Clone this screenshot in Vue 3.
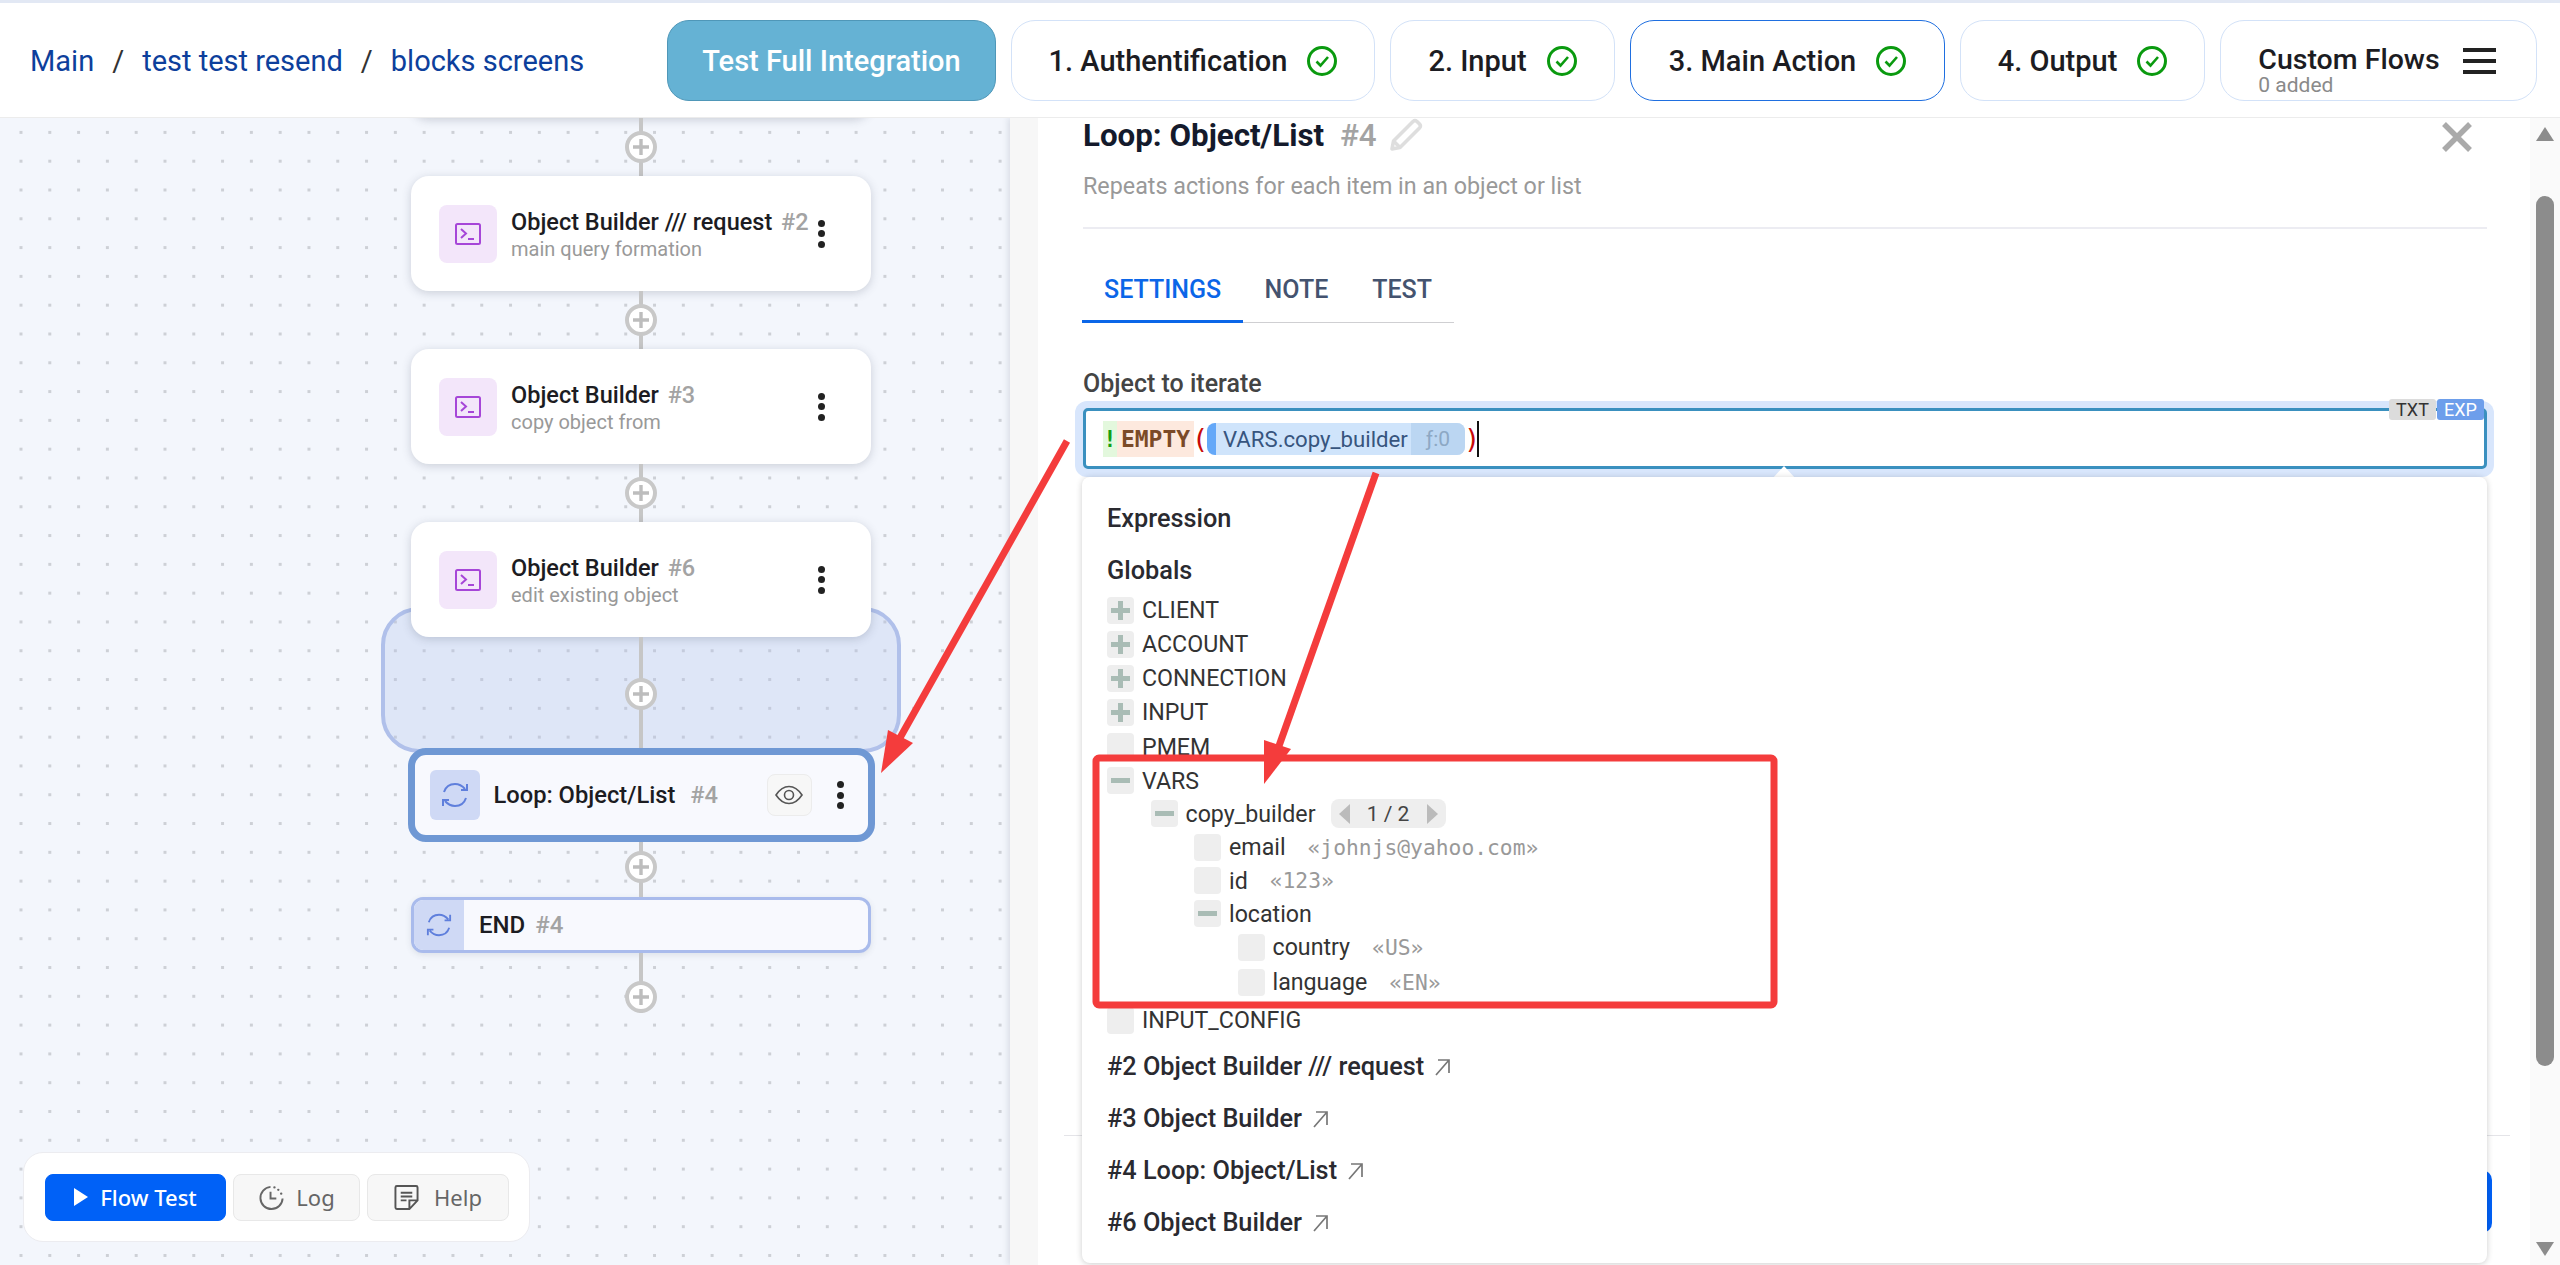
<template>
  <div class="page">
    <header class="topbar">
      <nav class="crumbs">
        <a>Main</a><i>/</i><a>test test resend</a><i>/</i><a>blocks screens</a>
      </nav>
      <div class="steps">
        <button class="step step-test">Test Full Integration</button>
        <button v-for="s in steps" :key="s.label" class="step" :class="{ active: s.active }" :style="{ width: s.width + 'px' }">
          {{ s.label }}
          <svg class="check" viewBox="0 0 30 30" width="30" height="30">
            <circle cx="15" cy="15" r="13.5" fill="none" stroke="#0a9a0f" stroke-width="3" />
            <path d="M9.5 15.5l4 4 7.5-8.5" fill="none" stroke="#0a9a0f" stroke-width="2.6" />
          </svg>
        </button>
        <button class="step step-custom">
          <span class="custom-text">
            <b>Custom Flows</b>
            <small>0 added</small>
          </span>
          <span class="burger"><i></i><i></i><i></i></span>
        </button>
      </div>
    </header>

    <main class="body">
      <section class="canvas">
        <div class="flow">
          <div class="loop-bg"></div>
          <div class="node node-top"></div>
          <template v-for="n in nodes" :key="n.id">
            <div class="link">
              <span class="plus">
                <svg viewBox="0 0 32 32" width="32" height="32"><circle cx="16" cy="16" r="14" fill="#fff" stroke="#c8c8c8" stroke-width="4" /><path d="M16 8v16M8 16h16" stroke="#bdbdbd" stroke-width="3.4" /></svg>
              </span>
            </div>
            <div class="node">
              <span class="node-icon">
                <svg viewBox="0 0 28 24" width="28" height="24" fill="none" stroke="#a646d8" stroke-width="2">
                  <rect x="2" y="2" width="24" height="20" rx="1.5" />
                  <path d="M7 7l5 4.5-5 4.5M14 17h6" />
                </svg>
              </span>
              <div class="node-text">
                <div class="node-title">{{ n.title }} <em>#{{ n.id }}</em></div>
                <div class="node-sub">{{ n.sub }}</div>
              </div>
              <span class="kebab"><i></i><i></i><i></i></span>
            </div>
          </template>
          <div class="link link-tall">
            <span class="plus">
              <svg viewBox="0 0 32 32" width="32" height="32"><circle cx="16" cy="16" r="14" fill="#fff" stroke="#c8c8c8" stroke-width="4" /><path d="M16 8v16M8 16h16" stroke="#bdbdbd" stroke-width="3.4" /></svg>
            </span>
          </div>
          <div class="node-loop">
            <span class="loop-icon">
              <svg viewBox="0 0 28 28" width="28" height="28" fill="none" stroke="#5f7fdc" stroke-width="2">
                <path d="M3 11C5 5 10 3 14 3c4 0 7 1.500 10 5M26 3v6h-6M25 17c-2 6-7 8-11 8-4 0-7-1.500-10-5M2 25v-6h6" />
              </svg>
            </span>
            <span class="loop-title">Loop: Object/List <em>#4</em></span>
            <span class="eye">
              <svg viewBox="0 0 28 20" width="28" height="20" fill="none" stroke="#555" stroke-width="1.600">
                <path d="M1 10C5 4 9 1.500 14 1.500S23 4 27 10c-4 6-8 8.500-13 8.500S5 16 1 10z" />
                <circle cx="14" cy="10" r="4.500" />
              </svg>
            </span>
            <span class="kebab kebab-loop"><i></i><i></i><i></i></span>
          </div>
          <div class="link link-short">
            <span class="plus">
              <svg viewBox="0 0 32 32" width="32" height="32"><circle cx="16" cy="16" r="14" fill="#fff" stroke="#c8c8c8" stroke-width="4" /><path d="M16 8v16M8 16h16" stroke="#bdbdbd" stroke-width="3.4" /></svg>
            </span>
          </div>
          <div class="node-end">
            <span class="end-icon">
              <svg viewBox="0 0 28 28" width="26" height="26" fill="none" stroke="#5f7fdc" stroke-width="2">
                <path d="M3 11C5 5 10 3 14 3c4 0 7 1.500 10 5M26 3v6h-6M25 17c-2 6-7 8-11 8-4 0-7-1.500-10-5M2 25v-6h6" />
              </svg>
            </span>
            <span class="end-title">END <em>#4</em></span>
          </div>
          <div class="link link-last">
            <span class="plus">
              <svg viewBox="0 0 32 32" width="32" height="32"><circle cx="16" cy="16" r="14" fill="#fff" stroke="#c8c8c8" stroke-width="4" /><path d="M16 8v16M8 16h16" stroke="#bdbdbd" stroke-width="3.4" /></svg>
            </span>
          </div>
        </div>

        <div class="toolbar">
          <button class="tool tool-run">
            <svg viewBox="0 0 14 18" width="14" height="18"><path d="M0 0l14 9-14 9z" fill="#fff" /></svg>
            Flow Test
          </button>
          <button class="tool tool-log">
            <svg viewBox="0 0 28 28" width="27" height="27" fill="none" stroke="#666" stroke-width="2">
              <path d="M13 3A11.500 11.500 0 1 0 25.500 15" />
              <path d="M13 8v7h6" />
              <path d="M17 3.500h.1M21 6h.1M24 10h.1" stroke-width="2.400" stroke-linecap="round" />
            </svg>
            Log
          </button>
          <button class="tool tool-help">
            <svg viewBox="0 0 26 28" width="25" height="27" fill="none" stroke="#555" stroke-width="2">
              <path d="M16 26H3a1.500 1.500 0 0 1-1.500-1.500v-21A1.500 1.500 0 0 1 3 2h20a1.500 1.500 0 0 1 1.500 1.500V17zM16 26v-9h8.500" />
              <path d="M7 9h12M7 13h12M7 17h6" />
            </svg>
            Help
          </button>
        </div>
      </section>

      <aside class="panel">
        <div class="panel-scroll">
          <div class="panel-head">
            <h1>Loop: Object/List <em>#4</em>
              <svg class="pencil" viewBox="0 0 34 34" width="34" height="34" fill="none" stroke="#dedede" stroke-width="3.600" stroke-linejoin="round">
                <path d="M3 31l1.500-8L24 3.500a3 3 0 0 1 4 0l2.500 2.500a3 3 0 0 1 0 4L11 29.500z" />
                <path d="M4.500 23l6.500 6.500" />
              </svg>
            </h1>
            <svg class="close" viewBox="0 0 30 30" width="30" height="30" stroke="#aaa" stroke-width="5.500"><path d="M2 2l26 26M28 2L2 28" /></svg>
          </div>
          <p class="desc">Repeats actions for each item in an object or list</p>
          <div class="tabs">
            <span class="tab on">SETTINGS</span>
            <span class="tab">NOTE</span>
            <span class="tab">TEST</span>
          </div>
          <label class="field-label">Object to iterate</label>
          <div class="halo">
            <div class="input">
              <span class="bang">!</span><span class="fn">EMPTY</span><span class="paren">(</span>
              <span class="chip"><span class="chip-name">VARS.copy_builder</span><span class="chip-f">ƒ:0</span></span>
              <span class="paren paren-close">)</span><span class="cursor"></span>
              <span class="mode"><i class="txt">TXT</i><i class="exp">EXP</i></span>
            </div>
            <span class="notch"></span>
          </div>

          <div class="dropdown">
            <div class="dd-head dd-expr">Expression</div>
            <div class="dd-head dd-globals">Globals</div>
            <div class="tree">
              <div v-for="r in rows" :key="r.label" class="row" :style="{ height: r.h + 'px', paddingLeft: r.depth * 43.500 + 'px' }">
                <span class="toggle">
                  <i v-if="r.sign" class="bar"></i>
                  <i v-if="r.sign === '+'" class="bar bar-v"></i>
                </span>
                <span class="row-label">{{ r.label }}</span>
                <span v-if="r.value" class="row-val">{{ r.value }}</span>
                <span v-if="r.pager" class="pager"><i class="tri-l"></i><b>1 / 2</b><i class="tri-r"></i></span>
              </div>
            </div>
            <div v-for="l in links" :key="l" class="dd-link">
              {{ l }}
              <svg viewBox="0 0 18 18" width="18" height="18" fill="none" stroke="#777" stroke-width="1.700"><path d="M3 17L16 2M5 2h11v13" /></svg>
            </div>
          </div>
          <div class="panel-foot"><span class="save"></span></div>
        </div>
        <div class="scrollbar">
          <i class="sb-up"></i>
          <i class="sb-thumb"></i>
          <i class="sb-down"></i>
        </div>
      </aside>
    </main>

    <!-- annotations drawn on top of the screenshot -->
    <svg class="notes" viewBox="0 0 2560 1265" width="2560" height="1265">
      <rect x="1096" y="758" width="678" height="247" rx="3" fill="none" stroke="#f43c3c" stroke-width="7" />
      <path d="M1067 441L892 752" stroke="#f43c3c" stroke-width="7" />
      <path d="M881 773L888 730 913 743z" fill="#f43c3c" />
      <path d="M1376 473L1274 760" stroke="#f43c3c" stroke-width="7" />
      <path d="M1264 784V740L1291 749z" fill="#f43c3c" />
    </svg>
  </div>
</template>

<script setup>
const steps = [
  { label: '1. Authentification', width: 364 },
  { label: '2. Input', width: 225 },
  { label: '3. Main Action', width: 315, active: true },
  { label: '4. Output', width: 245 },
];

const nodes = [
  { id: 2, title: 'Object Builder /// request', sub: 'main query formation' },
  { id: 3, title: 'Object Builder', sub: 'copy object from' },
  { id: 6, title: 'Object Builder', sub: 'edit existing object' },
];

const rows = [
  { label: 'CLIENT', depth: 0, sign: '+', h: 34 },
  { label: 'ACCOUNT', depth: 0, sign: '+', h: 34 },
  { label: 'CONNECTION', depth: 0, sign: '+', h: 34 },
  { label: 'INPUT', depth: 0, sign: '+', h: 34 },
  { label: 'PMEM', depth: 0, h: 35 },
  { label: 'VARS', depth: 0, sign: '-', h: 33 },
  { label: 'copy_builder', depth: 1, sign: '-', h: 33, pager: true },
  { label: 'email', depth: 2, h: 34, value: '«johnjs@yahoo.com»' },
  { label: 'id', depth: 2, h: 33, value: '«123»' },
  { label: 'location', depth: 2, sign: '-', h: 33 },
  { label: 'country', depth: 3, h: 34, value: '«US»' },
  { label: 'language', depth: 3, h: 36, value: '«EN»' },
  { label: 'INPUT_CONFIG', depth: 0, h: 40 },
];

const links = ['#2 Object Builder /// request', '#3 Object Builder', '#4 Loop: Object/List', '#6 Object Builder'];
</script>

<style>
html, body {
  margin: 0;
  background: #fff;
  overflow: hidden;
}
</style>

<style scoped>
* {
  box-sizing: border-box;
}
.page {
  position: relative;
  width: 2560px;
  height: 1265px;
  overflow: hidden;
  display: flex;
  flex-direction: column;
  font-family: Roboto, "Liberation Sans", sans-serif;
  color: #1c1c22;
}
button {
  font-family: inherit;
}
em {
  font-style: normal;
  color: #a3a3a3;
}

/* top bar */
.topbar {
  height: 118px;
  flex: none;
  display: flex;
  align-items: center;
  justify-content: space-between;
  padding: 3px 23px 0 30px;
  background: #fff;
  border-top: 3px solid #e2e8f4;
  border-bottom: 1px solid #ececec;
  position: relative;
  z-index: 5;
  margin-top: 0;
}
.crumbs {
  display: flex;
  align-items: center;
  font-size: 29px;
  color: #0d3f9c;
  margin-top: -2px;
}
.crumbs i {
  font-style: normal;
  color: #333;
  margin: 0 18px;
}
.steps {
  display: flex;
  gap: 15px;
  margin-top: -2px;
}
.step {
  height: 81px;
  display: flex;
  align-items: center;
  justify-content: center;
  gap: 20px;
  background: #fff;
  border: 1.500px solid #d3e2f8;
  border-radius: 24px;
  font-size: 29px;
  font-weight: 500;
  color: #1c1c22;
  padding: 0;
}
.step.active {
  border-color: #1f6fe0;
}
.step-test {
  width: 329px;
  background: #65b2d4;
  border-color: #4f97b8;
  color: #fff;
  border-radius: 22px;
}
.check {
  flex: none;
}
.step-custom {
  width: 317px;
  gap: 23px;
  padding-right: 3px;
}
.custom-text {
  display: flex;
  flex-direction: column;
  align-items: flex-start;
  line-height: 1;
  padding-top: 21px;
}
.custom-text b {
  font-weight: 500;
  font-size: 28.500px;
}
.custom-text small {
  font-size: 21px;
  font-weight: 400;
  color: #8a8a8a;
}
.burger {
  display: flex;
  flex-direction: column;
  gap: 7px;
}
.burger i {
  display: block;
  width: 33px;
  height: 4px;
  background: #222;
}

.body {
  flex: 1;
  display: flex;
  min-height: 0;
}

/* canvas */
.canvas {
  position: relative;
  width: 1010px;
  flex: none;
  overflow: hidden;
  background-color: #f3f6fc;
  background-image: radial-gradient(circle, #cdd0d6 1.500px, transparent 1.700px);
  background-size: 28.800px 28.800px;
  background-position: 6.600px 0px;
}
.flow {
  position: absolute;
  left: 411px;
  top: -115px;
  width: 460px;
  display: flex;
  flex-direction: column;
  align-items: center;
}
.loop-bg {
  position: absolute;
  left: -30px;
  top: 604px;
  width: 520px;
  height: 146px;
  background: rgba(176, 192, 234, 0.3);
  border: 4px solid #b0c0ea;
  border-radius: 38px;
}
.node, .node-top {
  position: relative;
  width: 460px;
  height: 115px;
  flex: none;
  background: #fff;
  border-radius: 18px;
  box-shadow: 0 2px 10px rgba(60, 70, 90, 0.22);
  display: flex;
  align-items: center;
  padding-left: 28px;
}
.link {
  position: relative;
  width: 4px;
  height: 58px;
  flex: none;
  background: #c6c6c6;
  display: flex;
  align-items: center;
  justify-content: center;
}
.plus {
  display: flex;
  flex: none;
}
.link-tall {
  height: 111px;
  padding-top: 3px;
}
.link-short {
  height: 55px;
  padding-bottom: 5px;
}
.link-last {
  height: 60px;
  padding-top: 28px;
}
.node-icon {
  width: 58px;
  height: 58px;
  flex: none;
  border-radius: 8px;
  background: #f3e6fa;
  display: flex;
  align-items: center;
  justify-content: center;
}
.node-text {
  margin-left: 14px;
  flex: 1;
  min-width: 0;
}
.node-title {
  font-size: 23.500px;
  font-weight: 500;
  line-height: 30px;
  white-space: nowrap;
}
.node-title em {
  margin-left: 3px;
}
.node-sub {
  font-size: 20px;
  line-height: 24px;
  color: #999;
}
.kebab {
  display: flex;
  flex-direction: column;
  gap: 3.500px;
  width: 7px;
  margin-right: 46px;
}
.kebab i {
  display: block;
  width: 7px;
  height: 7px;
  border-radius: 50%;
  background: #222;
}
.node-loop {
  position: relative;
  width: 467px;
  height: 94px;
  flex: none;
  display: flex;
  align-items: center;
  background: #f8f9fe;
  border: 7px solid #6f98d4;
  border-radius: 18px;
  padding-left: 15px;
}
.loop-icon {
  width: 50px;
  height: 50px;
  flex: none;
  border-radius: 6px;
  background: #cfd9f5;
  display: flex;
  align-items: center;
  justify-content: center;
}
.loop-title {
  margin-left: 14px;
  flex: 1;
  font-size: 23.700px;
  font-weight: 500;
  white-space: nowrap;
}
.loop-title em {
  margin-left: 9px;
}
.end-title em {
  margin-left: 4px;
}
.eye {
  width: 45px;
  height: 42px;
  flex: none;
  display: flex;
  align-items: center;
  justify-content: center;
  background: #f7f7f7;
  border: 1px solid #ececec;
  border-radius: 8px;
  margin-right: 25px;
}
.kebab-loop {
  margin-right: 24px;
}
.node-end {
  width: 460px;
  height: 56px;
  flex: none;
  display: flex;
  align-items: center;
  background: #f8f9fe;
  border: 3.500px solid #a9bbec;
  border-radius: 12px;
  overflow: hidden;
  box-shadow: 0 2px 6px rgba(60, 70, 90, 0.12);
}
.end-icon {
  width: 50px;
  height: 100%;
  flex: none;
  background: #cfd9f5;
  display: flex;
  align-items: center;
  justify-content: center;
}
.end-title {
  margin-left: 15px;
  font-size: 24px;
  font-weight: 500;
}
.toolbar {
  position: absolute;
  left: 23px;
  top: 1034px;
  width: 507px;
  height: 90px;
  display: flex;
  align-items: center;
  gap: 7px;
  padding-left: 21px;
  background: #fff;
  border: 1px solid #ececf0;
  border-radius: 20px;
}
.tool {
  height: 47px;
  display: flex;
  align-items: center;
  justify-content: center;
  gap: 11px;
  border: 1px solid #e8e8e8;
  background: #f7f7f7;
  border-radius: 8px;
  font-family: "Noto Sans", sans-serif;
  font-size: 22px;
  color: #666;
  padding: 0;
}
.tool-run {
  width: 181px;
  gap: 12px;
  background: #0061f7;
  border-color: #0061f7;
  color: #fff;
  font-weight: 500;
}
.tool-log {
  width: 127px;
}
.tool-help {
  width: 142px;
  gap: 15px;
}

/* side panel */
.panel {
  flex: 1;
  min-width: 0;
  display: flex;
  background: #fff;
  box-shadow: -2px 0 6px rgba(60, 70, 90, 0.14);
  position: relative;
  z-index: 1;
}
.panel-scroll {
  flex: 1;
  min-width: 0;
  padding: 0 0 0 45px;
  position: relative;
  border-left: 28px solid #f7f7f7;
}
.panel-head {
  width: 1404px;
  height: 34px;
  display: flex;
  align-items: center;
  justify-content: space-between;
  padding-right: 15px;
}
.panel-head h1 {
  margin: 0;
  display: flex;
  align-items: center;
  font-size: 31.300px;
  font-weight: 700;
  color: #141a2c;
  white-space: pre;
}
.panel-head h1 em {
  margin-left: 8px;
  font-weight: 500;
}
.pencil {
  margin-left: 12px;
}
.close {
  margin-top: 3px;
}
.desc {
  margin: 20px 0 0;
  font-size: 23.300px;
  line-height: 28px;
  color: #999;
  width: 1404px;
  height: 57px;
  border-bottom: 2px solid #ececf2;
}
.tabs {
  margin: 41px 0 0 -1px;
  width: 372px;
  height: 53px;
  display: flex;
  border-bottom: 1.500px solid #cfcfd2;
}
.tab {
  padding: 0 22px;
  font-size: 25px;
  font-weight: 500;
  line-height: 40px;
  color: #44536f;
}
.tab.on {
  color: #0b66e8;
  width: 161px;
  height: 53px;
  border-bottom: 3px solid #0b66e8;
  padding: 0 21px 0 22px;
}
.field-label {
  display: block;
  margin-top: 46px;
  font-size: 25px;
  font-weight: 500;
  line-height: 30px;
  color: #444;
}
.halo {
  position: relative;
  width: 1419px;
  height: 76px;
  margin: 2px 0 0 -8px;
  padding: 7px 7px 8px 8px;
  background: #d8e6fc;
  border-radius: 12px;
}
.input {
  position: relative;
  height: 61px;
  background: #fff;
  border: 3px solid #3a90bf;
  border-radius: 5px;
  display: flex;
  align-items: center;
  padding-left: 17px;
}
.bang, .fn {
  height: 36px;
  display: flex;
  align-items: center;
  font-family: "DejaVu Sans Mono", monospace;
  font-size: 23px;
  font-weight: 700;
}
.bang {
  width: 14px;
  justify-content: center;
  background: #e3f8dd;
  color: #12a012;
}
.fn {
  width: 77px;
  justify-content: center;
  background: #fde9de;
  color: #7b4a27;
}
.paren {
  font-family: "DejaVu Sans Mono", monospace;
  color: #c80a0a;
  font-size: 27px;
  width: 12px;
  text-align: center;
  display: flex;
  justify-content: center;
}
.chip {
  display: flex;
  height: 32px;
  width: 258px;
  align-items: stretch;
  border-left: 9px solid #64a8f8;
  border-radius: 8px;
  overflow: hidden;
  background: #cfe4fb;
  margin-left: 1px;
  font-size: 22.200px;
  line-height: 32px;
}
.chip-name {
  color: #37557e;
  padding-left: 7px;
  width: 195px;
  white-space: nowrap;
}
.chip-f {
  flex: 1;
  background: #bbd6f2;
  color: #8da8c4;
  text-align: center;
  font-size: 21px;
}
.paren-close {
  margin-left: 2px;
  width: 10px;
}
.cursor {
  width: 1.500px;
  height: 36px;
  background: #111;
}
.mode {
  position: absolute;
  right: 0;
  top: -12px;
  display: flex;
  gap: 1px;
}
.mode i {
  width: 47px;
  height: 21px;
  font-style: normal;
  font-size: 18px;
  line-height: 21px;
  text-align: center;
  border-radius: 3px;
}
.txt {
  background: #dcdcdc;
  color: #333;
}
.exp {
  background: #6d9eeb;
  color: #fff;
}
.notch {
  position: absolute;
  left: 697px;
  bottom: -2px;
  width: 24px;
  height: 13px;
  background: #fff;
  clip-path: polygon(50% 0, 100% 100%, 0 100%);
}
.dropdown {
  position: relative;
  z-index: 2;
  width: 1405px;
  height: 786px;
  margin-left: -1px;
  padding: 0 0 0 25px;
  background: #fff;
  border-radius: 8px;
  box-shadow: 0 1px 6px rgba(0, 0, 0, 0.2);
}
.dd-head, .dd-link {
  font-size: 25.300px;
  font-weight: 500;
  color: #2a2a30;
  line-height: 30px;
}
.dd-expr {
  padding-top: 27px;
}
.dd-globals {
  margin-top: 22px;
}
.tree {
  margin-top: 7px;
}
.row {
  display: flex;
  align-items: center;
  font-size: 23.200px;
  color: #333;
  white-space: nowrap;
}
.toggle {
  position: relative;
  width: 27px;
  height: 27px;
  flex: none;
  margin-right: 8px;
  background: #eee;
  border-radius: 4px;
}
.bar {
  position: absolute;
  left: 4px;
  top: 11px;
  width: 19px;
  height: 5px;
  background: #a9bcb5;
}
.bar-v {
  left: 11px;
  top: 4px;
  width: 5px;
  height: 19px;
}
.row-val {
  margin-left: 22px;
  font-family: "DejaVu Sans Mono", monospace;
  font-size: 21.300px;
  color: #999;
}
.pager {
  margin-left: 15px;
  width: 115px;
  height: 29px;
  display: flex;
  align-items: center;
  justify-content: space-between;
  padding: 0 8px;
  background: #eee;
  border-radius: 8px;
}
.pager b {
  font-size: 21px;
  font-weight: 400;
  color: #444;
}
.tri-l, .tri-r {
  width: 0;
  height: 0;
  border-top: 10px solid transparent;
  border-bottom: 10px solid transparent;
}
.tri-l {
  border-right: 11px solid #bbb;
}
.tri-r {
  border-left: 11px solid #bbb;
}
.dd-link {
  display: flex;
  align-items: center;
  gap: 9px;
  height: 52px;
}
.tree + .dd-link {
  margin-top: 1px;
}
.panel-foot {
  position: absolute;
  left: 26px;
  right: 20px;
  top: 1017px;
  height: 120px;
  border-top: 1px solid #e4e4e8;
}
.save {
  position: absolute;
  right: 18px;
  top: 34px;
  width: 60px;
  height: 63px;
  background: #0061f7;
  border-radius: 10px;
}
.scrollbar {
  width: 30px;
  flex: none;
  position: relative;
  background: #fafafa;
}
.sb-thumb {
  position: absolute;
  left: 6px;
  top: 78px;
  width: 18px;
  height: 870px;
  background: #8c8c8c;
  border-radius: 9px;
}
.sb-up, .sb-down {
  position: absolute;
  left: 6px;
  width: 0;
  height: 0;
  border-left: 9px solid transparent;
  border-right: 9px solid transparent;
}
.sb-up {
  top: 9px;
  border-bottom: 14px solid #8c8c8c;
}
.sb-down {
  top: 1124px;
  border-top: 14px solid #8c8c8c;
}

/* red arrows and frame on top of everything */
.notes {
  position: absolute;
  left: 0;
  top: 0;
  z-index: 10;
  pointer-events: none;
}
</style>
